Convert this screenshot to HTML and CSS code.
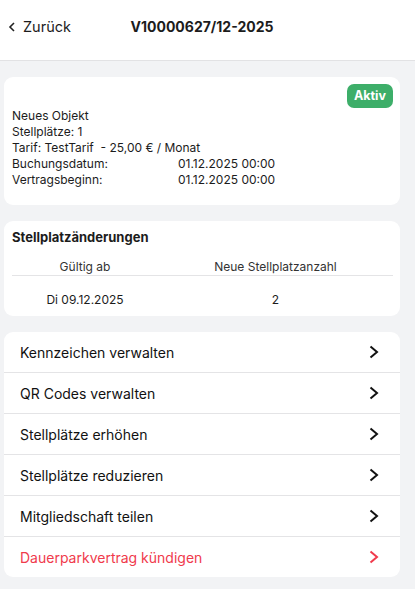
FILE: index.html
```html
<!DOCTYPE html>
<html lang="de">
<head>
    <meta charset="utf-8">
    <title>Vertrag</title>
    <link rel="stylesheet" href="styles.css">
</head>
<body>
    <div class="header">
        <div class="header-inner">
            <a class="back" href="#">
                <svg width="8" height="10" viewBox="0 0 8 10"><path d="M6 1 L2 5 L6 9" fill="none" stroke="#222" stroke-width="1.6"/></svg>
                <span>Zurück</span>
            </a>
            <h1>V10000627/12-2025</h1>
            <span></span>
        </div>
    </div>
    <div class="main">
        <div class="card info">
            <div class="badge-row"><span class="badge">Aktiv</span></div>
            <div class="line">Neues Objekt</div>
            <div class="line">Stellplätze: 1</div>
            <div class="line">Tarif: TestTarif&nbsp; - 25,00 € / Monat</div>
            <div class="line pair"><span>Buchungsdatum:</span><span>01.12.2025 00:00</span></div>
            <div class="line pair"><span>Vertragsbeginn:</span><span>01.12.2025 00:00</span></div>
        </div>
        <div class="card changes">
            <h2>Stellplatzänderungen</h2>
            <div class="table">
                <div class="th">Gültig ab</div>
                <div class="th">Neue Stellplatzanzahl</div>
                <div class="td">Di 09.12.2025</div>
                <div class="td">2</div>
            </div>
        </div>
        <div class="card menu">
            <a class="item" href="#"><span>Kennzeichen verwalten</span><svg width="12" height="14" viewBox="0 0 12 14"><path d="M2.5 1.5 L9 7 L2.5 12.5" fill="none" stroke="#111" stroke-width="2"/></svg></a>
            <a class="item" href="#"><span>QR Codes verwalten</span><svg width="12" height="14" viewBox="0 0 12 14"><path d="M2.5 1.5 L9 7 L2.5 12.5" fill="none" stroke="#111" stroke-width="2"/></svg></a>
            <a class="item" href="#"><span>Stellplätze erhöhen</span><svg width="12" height="14" viewBox="0 0 12 14"><path d="M2.5 1.5 L9 7 L2.5 12.5" fill="none" stroke="#111" stroke-width="2"/></svg></a>
            <a class="item" href="#"><span>Stellplätze reduzieren</span><svg width="12" height="14" viewBox="0 0 12 14"><path d="M2.5 1.5 L9 7 L2.5 12.5" fill="none" stroke="#111" stroke-width="2"/></svg></a>
            <a class="item" href="#"><span>Mitgliedschaft teilen</span><svg width="12" height="14" viewBox="0 0 12 14"><path d="M2.5 1.5 L9 7 L2.5 12.5" fill="none" stroke="#111" stroke-width="2"/></svg></a>
            <a class="item danger" href="#"><span>Dauerparkvertrag kündigen</span><svg width="12" height="14" viewBox="0 0 12 14"><path d="M2.5 1.5 L9 7 L2.5 12.5" fill="none" stroke="#f03a4c" stroke-width="2"/></svg></a>
        </div>
    </div>
</body>
</html>
```

FILE: styles.css
```css
body{
    margin: 0;
    background-color: #f2f3f5;
    font-family: Inter, "Noto Sans", sans-serif;
    color: #1c1c1c;
}
.header{
    background-color: #ffffff;
    height: 60px;
    border-bottom: 1px solid #e2e2e4;
}
.header-inner{
    width: 404px;
    height: 52px;
    display: grid;
    grid-template-columns: 1fr auto 1fr;
    align-items: center;
}
.back{
    display: flex;
    align-items: center;
    gap: 7px;
    padding-left: 8px;
    text-decoration: none;
    color: #1c1c1c;
    font-size: 14.5px;
}
.back svg{
    margin-top: 1px;
}
h1{
    margin: 0;
    font-size: 14px;
    font-weight: 700;
}
.main{
    width: 396px;
    padding: 16px 4px;
    display: flex;
    flex-direction: column;
    gap: 16px;
}
.card{
    background-color: #ffffff;
    border-radius: 9px;
}
.info{
    padding: 7px 7px 17px 8px;
    font-size: 12px;
}
.badge-row{
    display: flex;
    justify-content: flex-end;
}
.badge{
    background-color: #3dae69;
    color: #ffffff;
    font-weight: 700;
    font-size: 12.5px;
    padding: 0 7px;
    height: 24px;
    line-height: 24px;
    border-radius: 7px;
}
.line{
    line-height: 16px;
}
.pair{
    display: grid;
    grid-template-columns: 166px 1fr;
}
.changes{
    padding: 8px 7px 7px 8px;
}
h2{
    margin: 0;
    font-size: 13px;
    font-weight: 700;
    line-height: 16px;
}
.table{
    display: grid;
    grid-template-columns: 146px 1fr;
    margin-top: 14px;
    font-size: 12px;
}
.th{
    text-align: center;
    color: #333333;
    line-height: 16px;
    border-bottom: 1px solid #e4e4e6;
}
.td{
    text-align: center;
    line-height: 16px;
    padding-top: 16px;
    padding-bottom: 1px;
}
.item{
    display: flex;
    align-items: center;
    justify-content: space-between;
    height: 40px;
    padding: 0 20px 0 16px;
    text-decoration: none;
    color: #111111;
    font-size: 14px;
    font-weight: 400;
}
.item + .item{
    border-top: 1px solid #e4e4e6;
}
.danger{
    color: #f03a4c;
}
```
